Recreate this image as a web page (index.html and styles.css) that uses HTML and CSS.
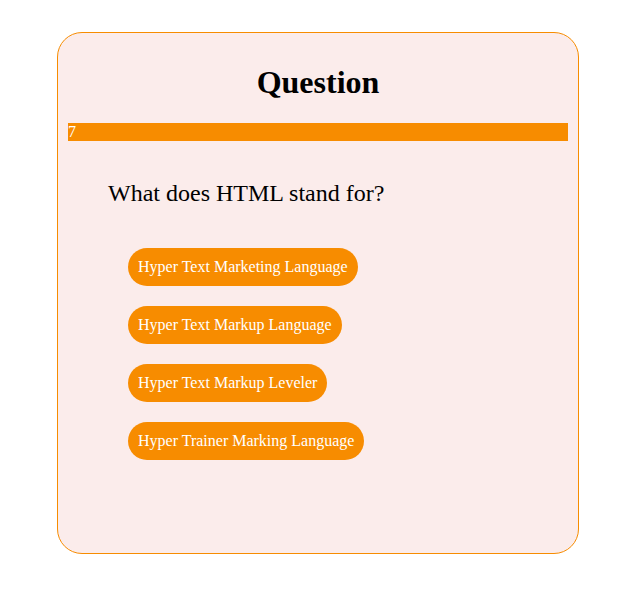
FILE: index.html
```html
<!DOCTYPE html>
<html>
<head>
<meta charset="utf-8">
<link rel="stylesheet" href="styles.css">
</head>
<body>
  <div class="card">
    <h1 class="title">Question</h1>
    <div class="timer">7</div>
    <p class="question">What does HTML stand for?</p>
    <div class="options">
      <button class="option">Hyper Text Marketing Language</button>
      <button class="option">Hyper Text Markup Language</button>
      <button class="option">Hyper Text Markup Leveler</button>
      <button class="option">Hyper Trainer Marking Language</button>
    </div>
  </div>
</body>
</html>
```
FILE: styles.css
```css
body {
  margin: 8px;
  font-family: "Liberation Serif", "Times New Roman", serif;
  background: #ffffff;
}

.card {
  width: 500px;
  height: 500px;
  padding: 10px;
  margin: 24px 0 0 49px;
  border: 1px solid #f78c00;
  border-radius: 25px;
  background: #fbeceb;
}

.title {
  text-align: center;
  font-size: 32px;
  margin: 21px 0 22px;
}

.timer {
  background: #f78c00;
  color: #ffffff;
  font-size: 16px;
  line-height: 18px;
  height: 18px;
}

.question {
  font-size: 24px;
  margin: 39px 0 0 40px;
}

.options {
  display: flex;
  flex-direction: column;
  align-items: flex-start;
  gap: 20px;
  margin: 41px 0 0 60px;
}

.option {
  font-family: "Liberation Serif", "Times New Roman", serif;
  font-size: 16px;
  line-height: 18px;
  padding: 10px;
  border: none;
  border-radius: 20px;
  background: #f78c00;
  color: #ffffff;
}
```
